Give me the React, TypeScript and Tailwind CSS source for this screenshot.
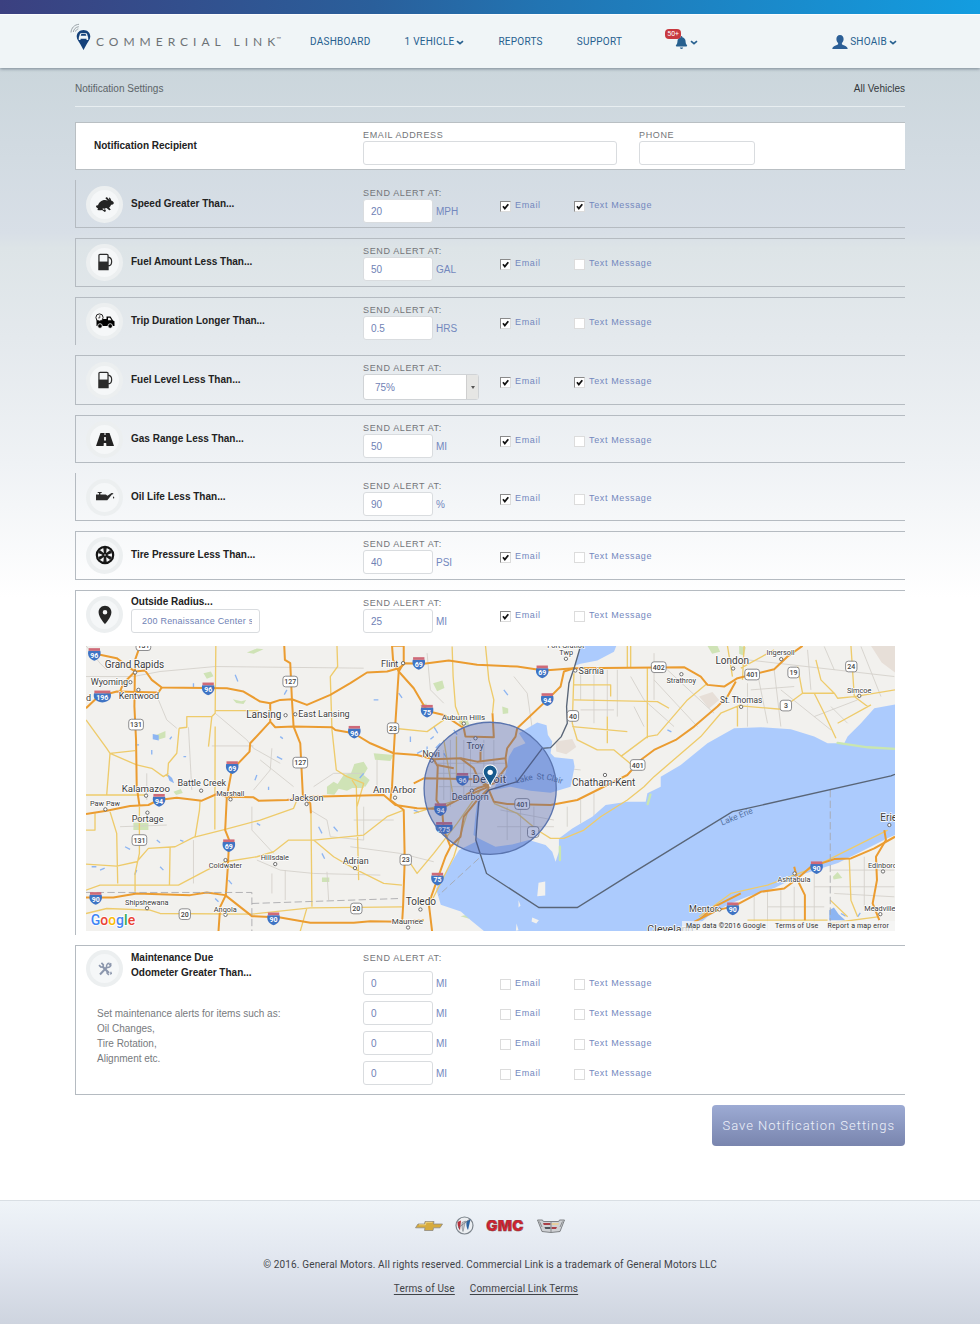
import type { ReactNode } from 'react';
import { FaBell } from 'react-icons/fa6';
import { MdPlace } from 'react-icons/md';

/* ---------- Icons ---------- */

function Caret() {
  return (
    <svg viewBox="0 0 8 5" className="w-2 h-[5px]" fill="none">
      <path d="M1 1.200 4 3.600 7 1.200" stroke="#27608f" strokeWidth="1.700" />
    </svg>
  );
}

function RabbitIcon() {
  return (
    <svg viewBox="0 0 18 15" className="w-[18px] h-[15px]" fill="#242424">
      <path d="M0 9.500C.4 8.200 1.300 8 2 8.500 2.500 5.500 5.500 3 9 3c1 0 2 .3 2.800.6L9.500 1.500C9.700.4 10.500.1 11.300.6l2.200 2.400C12.900 1.500 13 .6 13.500.4c.9.500 1.400 1.600 1.600 3.100 1.700.5 2.900 1.700 2.700 2.800-.3 1.200-1.700 1.500-2.800 1.500-.4 1.500-1.100 2.200-1.900 2.700l1.700 2.200-1.500.6-2.800-2.200-1.700.3 1.200 2.500-1.200 1.100L6 12.900c-1 .5-2.900.4-4.500 0l.4-1.900C.9 11 .2 10.400 0 9.500z" />
      <path d="M6.500 11.500h2v1.600l-1.500-.4z" fill="#eee" />
    </svg>
  );
}

function FuelIcon() {
  return (
    <svg viewBox="0 0 18 20" className="w-4 h-[18px]" fill="none" stroke="#2b2b2b">
      <path d="M2.200 18.500v-16a1.200 1.200 0 0 1 1.200-1.200h7.800a1.200 1.200 0 0 1 1.200 1.200v16z" strokeWidth="1.400" />
      <path d="M2 9.500h10.500V19H2z" fill="#2b2b2b" stroke="none" />
      <path d="M12.500 4.500c3 .5 4 2.500 4 5s-.8 4-2.200 4.500h-1.800" strokeWidth="1.300" />
    </svg>
  );
}

function VanIcon() {
  return (
    <svg viewBox="0 0 20 16" className="w-5 h-4">
      <path d="M1.500 6h10V3.500h4l2.500 4 1.500.8V13h-18z" fill="#000" />
      <path d="M13 4.700h2l1.500 2.600H13z" fill="#eee" />
      <circle cx="5" cy="13" r="2.300" fill="#000" stroke="#f3f3f3" strokeWidth=".8" />
      <circle cx="15.200" cy="13" r="2.300" fill="#000" stroke="#f3f3f3" strokeWidth=".8" />
      <circle cx="4.500" cy="4.500" r="3.600" fill="#fafafa" stroke="#222" strokeWidth="1" />
      <path d="M4.800 2.300v2.600H3.200" fill="none" stroke="#222" strokeWidth=".8" />
    </svg>
  );
}

function RoadIcon() {
  return (
    <svg viewBox="0 0 18 13" className="w-[18px] h-[13px]">
      <path d="M4.500 0h9L18 13H0z" fill="#222" />
      <path d="M8.500 0h1l.1 2H8.400zM8.200 4h1.600l.2 3.500H8zM7.800 10h2.400l.2 3H7.600z" fill="#f4f4f4" />
    </svg>
  );
}

function OilIcon() {
  return (
    <svg viewBox="0 0 20 12" className="w-5 h-3" fill="#2b2b2b">
      <path d="M1 3.500h3V2H2.700V1h4v1H5.400v1.500h5.400l1.700 1.300 4-2.800 1.800.3-.2 1-1.200.2-4.600 5.700H1z" />
      <path d="M18.600 5.200c.9 1.300.9 2.300 0 2.300s-.9-1 0-2.300z" />
    </svg>
  );
}

function WheelIcon() {
  return (
    <svg viewBox="0 0 20 20" className="size-5">
      <circle cx="10" cy="10" r="8.200" fill="#f5f6f7" stroke="#151515" strokeWidth="2.200" />
      {[0, 60, 120, 180, 240, 300].map((angle) => (
        <path key={angle} d="M9 9 8.300 3h3.400L11 9z" fill="#1c1c1c" transform={`rotate(${angle} 10 10)`} />
      ))}
      <circle cx="10" cy="10" r="2.600" fill="#1c1c1c" />
      <circle cx="10" cy="10" r="1" fill="#999" />
    </svg>
  );
}

function ToolsIcon() {
  return (
    <svg viewBox="0 0 14 14" className="size-3.5" fill="none" stroke="#8c97ad">
      <path d="M4.500 4.500 11 11" strokeWidth="2.200" />
      <path d="M1 3.200 3 5.200 5 4.800 5.300 2.800 3.400.9" strokeWidth="1.700" />
      <path d="M9.500 8.800 8.900 11l1.900 2M11.800 12.200l1.700-.6-.9-1.800" strokeWidth="1.300" />
      <path d="M2 12.500 9 5" strokeWidth="2" />
      <path d="M13.200 1.200 11.200 3.300M8.700 5.300C8 3 9.500 1.200 11.500 1.200M8.700 5.300c2.300.7 4.300-.8 4.300-2.800" strokeWidth="1.500" />
    </svg>
  );
}

function UserIcon() {
  return (
    <svg viewBox="0 0 16 14" className="w-4 h-3.5" fill="#2c5f96">
      <path d="M8 0c2.400 0 3.600 1.700 3.600 4 0 1.700-.7 3.200-1.700 4v1.300c.5.900 5.600 1.500 5.800 4.700H.3C.5 10.800 5.600 10.200 6.100 9.300V8c-1-.8-1.700-2.300-1.700-4C4.400 1.700 5.600 0 8 0z" />
    </svg>
  );
}

function BrandMark() {
  return (
    <svg viewBox="0 0 22 28" className="w-[22px] h-7 mb-2.5 shrink-0">
      <g fill="none" stroke="#9aa2a8" strokeWidth="1">
        <path d="M1 9.500C1.200 5 4.500 1.600 9 1.300" />
        <path d="M3.300 9C3.700 6.200 5.800 4 8.800 3.700" />
        <path d="M5.500 8.500c.3-1.200 1.300-2.200 2.800-2.600" />
      </g>
      <path d="M13.500 7C17.400 7 20.300 9.900 20.300 13.500c0 3-2.300 5.300-3.800 8L13.500 27l-3-5.500c-1.500-2.700-3.800-5-3.800-8C6.700 9.900 9.600 7 13.500 7z" fill="#14417a" />
      <path d="M9.300 13.300c.5-2.700 1-3 1.500-3.100h5.400c.5.100 1 .4 1.500 3.100.5.500.6 2.300.5 3.700h-1.700v-1.200h-6V17H8.800c-.1-1.400 0-3.200.5-3.700z" fill="#f0f5f8" />
      <path d="M10.700 12.700 11.300 11h4.400l.6 1.700z" fill="#14417a" />
    </svg>
  );
}

/* ---------- Header ---------- */

function NavLink({ label, caret }: { label: string; caret?: boolean }) {
  return (
    <a href="#" className="flex items-center gap-0.5 text-[10px] leading-4 tracking-wide text-[#27608f] whitespace-nowrap">
      {label}
      {caret && <Caret />}
    </a>
  );
}

function Header() {
  return (
    <header className="relative z-10 shadow-[0_1px_3px_rgba(60,75,90,0.55)]">
      <div className="h-3.5 bg-[linear-gradient(to_right,#3b4080,#2a5f9b_38%,#2274b2_55%,#139de0)]" />
      <div className="h-[54px] pt-px bg-[#f0f5f7] border-t border-white/70">
        <div className="max-w-[834px] mx-auto h-full flex items-center font-['Roboto',sans-serif]">
          <a href="#" className="flex items-center gap-1 text-[#6d7276] -ml-[3px] w-[240px]" aria-label="Commercial Link">
            <BrandMark />
            <span className="flex items-start font-['Lato',sans-serif] text-xs tracking-[5px] whitespace-nowrap">
              COMMERCIAL LINK
              <span className="-ml-1 text-[6px] leading-[10px] tracking-normal">™</span>
            </span>
          </a>
          <nav className="flex items-center gap-[34px]">
            <NavLink label="DASHBOARD" />
            <NavLink label="1 VEHICLE" caret />
            <NavLink label="REPORTS" />
            <NavLink label="SUPPORT" />
          </nav>
          <button type="button" aria-label="Alerts" className="relative ml-[53px] flex items-center gap-0.5 text-[#27608f]">
            <FaBell className="size-[13px]" />
            <Caret />
            <span className="absolute -left-2.5 -top-[7px] px-0.5 rounded-sm bg-[#c8393f] text-white text-[7px] leading-[10px]">50+</span>
          </button>
          <button type="button" className="ml-auto mr-2.5 flex items-center gap-0.5 text-[10px] leading-4 tracking-wide text-[#27608f]">
            <UserIcon />
            SHOAIB
            <Caret />
          </button>
        </div>
      </div>
    </header>
  );
}

/* ---------- Form pieces ---------- */

const inputClass = 'h-6 rounded-[3px] border border-[#d9dcdf] bg-white text-[#6f82b5]';

function IconCircle({ children }: { children: ReactNode }) {
  return (
    <div className="size-[37px] shrink-0 rounded-full border-4 border-[#eceff0] bg-[#f5f7f8] flex items-center justify-center">
      {children}
    </div>
  );
}

function Check({ label, checked }: { label: string; checked?: boolean }) {
  return (
    <label className="flex items-center gap-1 text-[9px] leading-3 tracking-[0.07em] text-[#7388be] whitespace-nowrap">
      <span className="relative size-[11px] mt-0.5">
        <input
          type="checkbox"
          defaultChecked={checked}
          className="peer block appearance-none size-[11px] bg-white border border-[#dcdcdc] checked:border-t-[#8a8a8a] checked:border-l-[#8a8a8a]"
        />
        <svg viewBox="0 0 11 11" className="absolute inset-0 hidden peer-checked:block pointer-events-none" fill="none">
          <path d="M3 5.300 4.800 7.500 8.300 3.200" stroke="#111" strokeWidth="1.800" />
        </svg>
      </span>
      {label}
    </label>
  );
}

function AlertLabel({ htmlFor, children }: { htmlFor: string; children: ReactNode }) {
  return (
    <label htmlFor={htmlFor} className="block text-[9px] leading-3 tracking-[0.07em] text-[#737579]">
      {children}
    </label>
  );
}

interface AlertRowProps {
  id: string;
  title: string;
  icon: ReactNode;
  value: string;
  unit?: string;
  email?: boolean;
  text?: boolean;
  extra?: ReactNode;
}

function AlertRow({ id, title, icon, value, unit, email, text, extra }: AlertRowProps) {
  return (
    <div className="grid grid-cols-[287px_137px_74px_1fr] items-center pt-1.5">
      <div className={`flex items-center gap-2 pl-2.5 -mt-0.5 ${extra ? 'self-end' : ''}`}>
        <IconCircle>{icon}</IconCircle>
        <div>
          <h2 className="text-[10px] leading-3 font-bold text-[#222]">{title}</h2>
          {extra}
        </div>
      </div>
      <div>
        <AlertLabel htmlFor={id}>SEND ALERT AT:</AlertLabel>
        {unit ? (
          <div className="flex items-center gap-[3px] text-[10px] text-[#7388be]">
            <input id={id} defaultValue={value} className={`${inputClass} w-[70px] px-[7px]`} />
            {unit}
          </div>
        ) : (
          <div className="relative w-[116px]">
            <select id={id} className="block appearance-none w-full h-[26px] pl-[11px] rounded-[3px] border border-[#d0d3d6] bg-white text-[10px] text-[#6f82b5]">
              <option>{value}</option>
            </select>
            <span className="absolute right-px top-px bottom-px w-3 border-l border-[#cfcfcf] bg-[#e6e6e4] flex items-center justify-center pointer-events-none">
              <svg viewBox="0 0 4 3" className="w-1 h-[3px]">
                <path d="M0 0h4L2 3z" fill="#555" />
              </svg>
            </span>
          </div>
        )}
      </div>
      <Check label="Email" checked={email} />
      <Check label="Text Message" checked={text} />
    </div>
  );
}

/* ---------- Map ---------- */

type Place = [x: number, y: number, name: string, size?: number];

const motorways = [
  'M60 45 110 55 150 85 165 95 195 92 215 120 245 143 440 145 490 155 540 185 570 190 600 180 635 178 680 195 750 165 810 130 860 98 920 95 955 85 975 70 1030 72 1105 62 1190 75 1310 80 1390 92 1480 85 1810 82 1860 110 1880 135 1930 140 1970 115 2080 88 2120 50 2165 18',
  'M18 205 55 170 110 155 235 158 245 143',
  'M165 95 130 130 120 155',
  'M180 18 165 60 163 200 168 300 170 440 178 495',
  'M18 522 80 512 150 498 205 495 235 480 290 473 365 482 410 462 440 470 520 472 535 482 620 480 690 470 910 465 945 495 1010 505 1080 507 1130 480 1225 440',
  'M612 18 614 60 630 70 635 178 640 260 660 310 668 470 690 490 692 520',
  'M570 190V245L585 262 640 260 755 262 765 270 820 280 870 310 940 340 1010 345 1060 358 1140 355 1190 365 1275 355 1280 325 1305 290 1310 265 1400 180 1440 140 1450 95 1480 85',
  'M570 245 510 310 508 335 455 390 440 470 437 530 435 570 447 600 443 680 437 765 420 800 415 873',
  'M18 772 100 772 170 760 330 765 380 757 435 765 515 828 600 832 690 848 820 848 870 843 960 845 1030 840',
  'M935 18H970V70L955 95M935 18 938 60 955 95 1000 145 1040 213 1090 225 1150 265 1155 290 1240 292 1236 220',
  'M955 95 945 250 940 340 935 440 930 480 970 510 973 660 968 800 965 850',
  'M1060 358 1072 380 1068 480 1085 510 1090 570 1110 620',
  'M1225 445 1190 480 1150 530 1140 590 1110 620 1095 650 1070 720 1045 790 1055 873',
  'M1275 355 1278 380 1240 430 1190 445 1130 480M1140 355 1180 385 1195 420 1225 445M1000 430 1030 415 1190 418 1230 440M1070 375 1120 385M1200 330V365',
  'M1225 450 1240 485 1280 492 1410 495 1490 480 1550 450 1600 425 1640 405 1680 360 1720 330 1785 300 1840 260 1910 200 1940 170 1965 125',
  'M1840 845 1910 810 1960 798 2040 755 2110 745 2150 715 2190 680 2260 657 2310 655 2380 625 2442 590',
  'M2140 680 2150 720 2172 765V840M2410 570 2415 600 2385 650 2388 720 2375 790 2395 840M1860 835 1900 800 1980 760',
];

const roads =
  'M407 18 405 220 395 230 385 320M405 260 404 568M18 240 80 325 90 340 170 375 215 385 250 410 265 400M90 340 165 332M90 340 80 465M297 265 320 262V230L395 230M405 212H535M297 265 290 340 265 370 262 410M770 18 772 80 750 110 755 270 768 390 800 410 850 430 830 500M18 465H200M90 515 110 580 113 730M178 500V640L165 700V755M18 672 110 678 170 665 205 625 285 620 340 592 435 568 540 540 640 505 650 480M18 750 60 735 295 735 380 690 435 665 530 650 580 635 625 600 700 600 850 585 920 530 970 510M360 480 358 510 345 590M270 620 268 735M692 520 695 800M700 600 760 650 820 685 910 730 965 735M18 820 80 805 210 810 240 820 515 822 690 803 965 800M815 420 828 440 835 720M660 873 680 803M18 570H45V520M1115 20 1118 110 1125 200 1150 265M1215 18 1225 120 1240 180 1236 220M1480 100 1475 250 1490 300 1550 330 1600 330 1660 380M1480 135H1590V170M1480 180 1730 185 1765 205M1580 230V310M1640 82V18M1475 260 1640 275M940 265 1040 275 1090 240M1000 520 1130 480M970 640 1010 700 1060 640 1130 550 1200 450M1050 790 1120 650 1160 520M1240 490 1310 520 1370 570 1410 595 1450 595 1510 570 1560 530 1640 480 1690 440 1720 410 1860 290 1920 220 1980 195M1620 350 1700 290 1730 285 1820 180 1880 130M1650 18V82M1700 82V295M1980 198 2100 208 2165 160 2260 160 2270 175 2320 170 2442 150M2150 80 2165 160M2205 60 2220 120 2260 160M2200 160 2230 220 2265 295M2310 18 2320 170 2360 200M1970 200V260M2270 250 2370 195M1980 85 2080 30M1940 18 1955 110M1990 18 1985 120M1855 830 1950 760 2060 735 2180 690 2420 570M2000 840H2240M2248 780 2300 830M2305 657 2310 780 2330 830M2240 850 2390 830M1090 300 1120 480M1128 290V420';

const lanes =
  'M18 110H160L240 95 405 80 850 85M235 180 260 240 290 265M405 220 500 300 520 325 600 370M395 318H520M325 262 335 450M575 325 570 390 520 450M640 440 540 360M515 500V570L580 640M530 660 600 690 700 700 900 705M575 700V760M615 690V780M740 695 745 780M700 440 760 400 850 400M690 510 740 540 750 590 850 600M18 18 60 70 80 90M200 400V480M120 560 260 555M340 600V730M890 360V460M1040 40 1050 150 1090 190M1300 110 1340 160 1360 300M1500 100V180M1540 100V250M1580 90V230M1610 90V230M1500 210H1600M1650 110 1690 180 1780 260M1720 120 1850 260M1760 90 1900 220M1660 200 1690 260M1720 40V180M2000 130V260M2030 100 2060 250M2080 90 2100 260M2010 150 2140 140M2000 60 2440 110M2180 30 2190 150M2230 20 2260 90M2340 20 2400 170M2100 150 2250 270M2200 230 2330 180M2250 200 2300 250M1460 500V560M1500 480V550M1540 460V540M1260 510 1420 540M1280 500V600M1320 500V610M1360 500V600M1250 560H1420M1410 380 1500 390M2020 770V870M2060 750V870M2100 750V870M2140 740V870M2200 700V870M2060 800H2230M2200 740H2440M2350 650V800M2250 690H2440M2260 760 2440 770M1060 370H1280M1070 400H1270M1075 440H1200M1090 330V480M1110 300V500M1150 300V480M1170 300V440M1210 300V440M1240 300V420M810 620 960 640 1060 665M820 540H940M850 500V600';

const ponds =
  'M165 315h12M215 330v14M275 290l-6 8M340 130v12M465 105l8 20M530 405l-6 16M565 440v10M600 290l8 6M135 620l15 8M240 680l10 10M170 690l-6 14M300 600l10 4M445 720l10 12M530 550l10 6M715 560l10 20M725 640l8 16M760 560l12 14M590 350l16 8M310 350h8M60 690l14-6M35 680h14M230 600l10 8M620 150l-8 14M955 160l10 14M880 180h14M1060 260l12 20M1080 310l-14 14M1040 320v18M1090 340l8 12M1010 340l16-8M1270 150l12 16M990 290v16M1060 290l-10 8M1120 270l10 14M850 400l-12 14M1000 510l16 6M405 775l10 10M1760 270l12 6M2280 820l14 8M2330 830l8-12';

const interstates: [number, number, string][] = [
  [43, 43, '96'], [67, 170, '196'], [384, 146, '96'], [456, 382, '69'], [237, 480, '94'],
  [446, 616, '69'], [47, 774, '90'], [580, 835, '90'], [822, 276, '96'], [1015, 70, '69'],
  [1385, 95, '69'], [1400, 178, '94'], [1040, 213, '75'], [1146, 417, '96'], [1080, 508, '94'],
  [1091, 564, '275'], [1071, 716, '75'], [2207, 682, '90'], [1956, 805, '90'],
];

const highways: [number, number, string][] = [
  [190, 16, '131'], [168, 254, '131'], [178, 600, '131'], [630, 125, '127'], [660, 368, '127'],
  [314, 822, '20'], [828, 805, '20'], [938, 265, '23'], [976, 659, '23'], [1477, 228, '40'],
  [1325, 492, '401'], [1358, 576, '3'], [1734, 82, '402'], [2014, 104, '401'], [2138, 98, '19'],
  [2311, 80, '24'], [2115, 197, '3'], [1671, 375, '401'],
];

const places: Place[] = [
  [74, 84, 'Grand Rapids', 30], [32, 134, 'Wyoming'], [116, 178, 'Kentwood'], [18, 183, 'd'],
  [498, 234, 'Lansing', 30], [654, 232, 'East Lansing'], [125, 455, 'Kalamazoo', 29],
  [292, 439, 'Battle Creek'], [408, 469, 'Marshall', 22], [30, 498, 'Paw Paw', 22],
  [155, 545, 'Portage'], [628, 482, 'Jackson'], [542, 661, 'Hillsdale', 22],
  [386, 685, 'Coldwater', 22], [787, 671, 'Adrian'], [135, 794, 'Shipshewana', 22],
  [401, 815, 'Angola', 22], [902, 81, 'Flint'], [1084, 239, 'Auburn Hills', 24],
  [1158, 327, 'Troy'], [1026, 351, 'Novi', 26], [1176, 429, 'Detroit', 34],
  [1114, 481, 'Dearborn'], [878, 459, 'Ann Arbor', 29], [976, 794, 'Toledo', 30],
  [934, 853, 'Maumee', 24], [1400, 24, 'Fort Gratiot', 22], [1436, 46, 'Twp', 22],
  [1494, 101, 'Sarnia'], [1474, 439, 'Chatham-Kent', 30], [1904, 71, 'London', 30],
  [2057, 47, 'Ingersoll', 22], [1757, 129, 'Strathroy', 22], [1918, 190, 'St. Thomas', 25],
  [2298, 158, 'Simcoe', 22], [2398, 543, 'Erie', 30], [2361, 685, 'Edinboro', 22],
  [2090, 725, 'Ashtabula', 22], [1825, 816, 'Mentor'], [2350, 812, 'Meadville', 22],
  [1700, 879, 'Cleveland', 32],
];

const towns = [
  [165, 98], [151, 127], [175, 150], [616, 226], [645, 223], [198, 467], [363, 452], [451, 478],
  [76, 508], [202, 518], [679, 492], [585, 672], [436, 660], [824, 684], [201, 804], [436, 824],
  [968, 70], [1150, 251], [1185, 295], [1054, 362], [1174, 452], [944, 473], [1020, 808], [983, 862],
  [1456, 57], [1484, 92], [1573, 405], [1957, 86], [2101, 58], [1802, 103], [1981, 201], [2335, 168],
  [2425, 555], [2406, 694], [2141, 700], [1916, 808], [2398, 822],
];

function RadiusMap() {
  return (
    <div className="relative mt-[13px] mx-2.5 overflow-hidden">
      <svg
        viewBox="18 18 2424 855"
        preserveAspectRatio="xMidYMid slice"
        className="block w-full h-[285px] font-['Roboto',sans-serif]"
        role="img"
        aria-label="Radius map"
      >
        <path d="M18 18h2424v855H18z" fill="#f2f1ee" />

        {/* parks */}
        <g fill="#cfe3b6">
          <path d="M740 440 760 425 772 432 790 405 812 400 822 372 850 365 862 385 850 405 868 420 855 440 832 436 800 452 775 446 762 464 740 462zM370 100l22-5 8 14-20 8zM458 178l25 6 15-4-8 12-22-3zM228 285l28-12v20l-20 6zM500 38l30-12 20 2-30 14zM160 548h45v22h-45zM725 712h22v14h-22zM280 455l22-8 6 12-20 6z" />
          <path d="M1058 130l28-8 6 22-22 10zM1020 195l18-4 4 14-18 2zM1265 200l18 6v14l-16 2zM880 340l60 5-10 18-46-4zM1130 230l30 6 8 22-30-4zM810 430h40v14h-40zM1140 828l26-6v14zM1880 18h30l8 18-24 6zM1975 18l20 4-6 26-14-6zM2256 710l14-14 14 18-26 4zM2270 640l16-8 6 12-20 6z" />
        </g>
        <path d="M1855 170l40-14 20 24-30 26zM2370 18h72v80l-40-30zM1425 305l50-8 12 24-30 22-30-8z" fill="#e7dfd8" />

        <path d={lanes} fill="none" stroke="#d2cfc9" strokeWidth="2.500" />

        {/* lakes */}
        <g fill="#accbfd">
          <path d="M1500 18h107l-7 18-50 26-50 10-18 6z" />
          <path d="M1370 248l28 8 4 29 13 20-5 35 12 12 56 6 4 22-12 60-60 18-60-6-60-12-50 10 10-25 25-25 10-50 15-25 35-15-20-30z" />
          <path d="M1200 470l-6 60-8 75-50 25-36 60-33 56 14 48 60 20 30 26 40 33h620l50-44 60-35 60-25 80-25 80-40 110-35 70-35 80-40 41-18V190l-82 15-40 45-40 40-10 20h-50l-40-20-70-22-90-6-80 3-80 45-80 65-60 35v30l-40 20-5 25h-55l-65 10-40 35-60 35-40 30v40l-10 30-10-30-20-20-50-15-50 13-50 7-50-25-16-10 6-60 10-70z" />
        </g>
        <path d="M1438 660v-40M1701 492l8-28M2270 309l90 13 82 5" fill="none" stroke="#c9e6b0" strokeWidth="7" strokeLinecap="round" />
        <g fill="#f2f1ee">
          <path d="M1374 728l20-4v42l-24 2zM1355 832l20 8-8 10-14-6zM1314 780l6 16-6 6zM1308 850l6 20-8 2z" />
        </g>
        <path d={ponds} fill="none" stroke="#8db5f2" strokeWidth="4" />
        <path d="M2245 810l14-8 14 20 20 18h-48zM260 400l16 14 6 16-14-8zM218 282l18 4v16l-18-4z" fill="#8db5f2" />

        {/* roads */}
        <path d={roads} fill="none" stroke="#eecb6b" strokeWidth="4" strokeLinejoin="round" />
        {motorways.map((d) => (
          <path key={d} d={d} fill="none" stroke="#eb9c30" strokeWidth="6" strokeLinejoin="round" />
        ))}

        {/* borders */}
        <path d="M18 757H515V873M515 790 960 775M1195 655 1075 765M2248 450V873" fill="none" stroke="#a5a5a8" strokeWidth="2.500" strokeDasharray="22 10" />
        <path
          d="M1500 18 1482 80 1465 130 1458 200 1460 250 1442 290 1410 323 1385 325 1310 425 1225 450 1195 485 1190 540 1186 600 1218 700 1375 802H1490L1650 702 1955 515 2430 408 2442 403"
          fill="none"
          stroke="#596577"
          strokeWidth="4"
        />

        {towns.map(([x, y]) => (
          <circle key={`${x}-${y}`} cx={x} cy={y} r="5" fill="#fff" stroke="#555" strokeWidth="2.500" />
        ))}

        {interstates.map(([x, y, n]) => (
          <g key={`i${x}`} transform={`translate(${x} ${y})`}>
            <path d={n.length > 2 ? 'M-25-10h50c3 14-2 24-25 28-23-4-28-14-25-28z' : 'M-18-10h36c3 14-2 24-18 30-16-6-21-16-18-30z'} fill="#3f74c4" />
            <path d={n.length > 2 ? 'M-24-18h48v8h-48z' : 'M-17-18h34v8h-34z'} fill="#cf6a78" />
            <text y="11" textAnchor="middle" fontSize="21" fontWeight="700" fill="#fff">{n}</text>
          </g>
        ))}
        {highways.map(([x, y, n]) => (
          <g key={`h${x}-${y}`} transform={`translate(${x} ${y})`}>
            <rect x={n.length > 2 ? -22 : -17} y="-16" width={n.length > 2 ? 44 : 34} height="32" rx="8" fill="#fff" stroke="#77777a" strokeWidth="2.500" />
            <text y="8" textAnchor="middle" fontSize="21" fontWeight="500" fill="#444">{n}</text>
          </g>
        ))}

        <g fill="#3c3c3c" stroke="#fff" strokeWidth="4" strokeLinejoin="round" paintOrder="stroke">
          {places.map(([x, y, name, size = 27]) => (
            <text key={name} x={x} y={y} fontSize={size}>{name}</text>
          ))}
        </g>
        <g fill="#55719f" fontSize="25">
          <text transform="translate(1306 430) rotate(-12)">Lake</text>
          <text transform="translate(1368 418) rotate(2)">St</text>
          <text transform="translate(1396 418) rotate(16)">Clair</text>
          <text transform="translate(1924 556) rotate(-22)">Lake Erie</text>
        </g>

        {/* alert radius */}
        <circle cx="1229" cy="445" r="198" fill="#3f57a8" fillOpacity=".36" stroke="#5a74ae" strokeWidth="4" />
        <path d="M1229 441c-4-20-21-30-21-45a21 21 0 0 1 42 0c0 15-17 25-21 45z" fill="#175a8e" stroke="#fff" strokeWidth="3" />
        <circle cx="1229" cy="397" r="8" fill="#fff" />

        <g fontSize="42" fontWeight="500" stroke="#fff" strokeWidth="5" paintOrder="stroke">
          <text x="32" y="856">
            <tspan fill="#4285f4">G</tspan>
            <tspan fill="#ea4335">o</tspan>
            <tspan fill="#fbbc05">o</tspan>
            <tspan fill="#4285f4">g</tspan>
            <tspan fill="#34a853">l</tspan>
            <tspan fill="#ea4335">e</tspan>
          </text>
        </g>
      </svg>
      <div className="absolute right-0 bottom-0 h-2.5 pl-1 pr-1.5 flex items-center gap-[9px] bg-[#f5f5f5]/75 font-['Roboto',sans-serif] text-[7px] leading-[10px] tracking-wide text-[#333]">
        <span>Map data ©2016 Google</span>
        <a href="#">Terms of Use</a>
        <a href="#">Report a map error</a>
      </div>
    </div>
  );
}

/* ---------- Footer ---------- */

function Footer() {
  return (
    <footer className="border-t border-[#d9dfe4] bg-[linear-gradient(to_bottom,#eff4f8,#e2e7f0_45%,#ced4df)] pt-[15px] pb-[27px] flex flex-col items-center font-['Roboto',sans-serif] text-[10px] leading-4 tracking-[0.015em] text-[#3f4347]">
      <div className="flex items-center gap-3 h-[19px]">
        <svg viewBox="0 0 28 10" className="w-7 h-2.5" role="img" aria-label="Chevrolet">
          <path d="M3 3h6.500L10 .5h9L18.500 3h9L25 6.800h-6.500L18 9.500H9.500l.5-2.700H.5z" fill="#d6ab3d" stroke="#8f8a80" strokeWidth=".8" />
          <path d="M4 3.800h6.500l.5-2.500h6.500" fill="none" stroke="#f3dc95" strokeWidth=".8" />
        </svg>
        <svg viewBox="0 0 19 19" className="size-[19px]" role="img" aria-label="Buick">
          <circle cx="9.500" cy="9.500" r="8.500" fill="#eceff2" stroke="#7d858d" strokeWidth="1.200" />
          <path d="M2.500 6 6 4.500l-1 10c-2-3-2.500-5.500-2.500-8.500z" fill="#b5303c" />
          <path d="M7 6.500 10.500 5 8 15.500c-1-2.500-1.200-6.500-1-9z" fill="#c8ccd2" stroke="#60676f" strokeWidth=".5" />
          <path d="m11.500 5 4-1.500L13 14c-1.500-2-2-6-1.500-9z" fill="#2c63a0" />
          <path d="M3 12 15 3" stroke="#697078" strokeWidth=".7" />
        </svg>
        <svg viewBox="0 0 39 12" className="w-[39px] h-3" role="img" aria-label="GMC">
          <text x="19" y="11" textAnchor="middle" fontFamily="Inter, sans-serif" fontSize="15" fontWeight="900" fill="#d3222f" stroke="#7d3a3e" strokeWidth=".5">GMC</text>
        </svg>
        <svg viewBox="0 0 28 14" className="w-7 h-3.5" role="img" aria-label="Cadillac">
          <path d="M.5 1h5l.8 1.500h15.400L22.500 1h5L23 12.500l-9 1-9-1z" fill="#cfd1d4" stroke="#74777b" strokeWidth=".9" />
          <path d="M6 4h7.500v2H6.800zM14.500 8H20l-1 2h-4.500z" fill="#a93f46" />
          <path d="M14.500 4H22l-.8 2h-6.700z" fill="#e7cf9e" />
          <path d="M7.500 8h6v2H8.300z" fill="#50545a" />
          <path d="M2.500 2.500 5 8M25.500 2.500 23 8M14 3v10" stroke="#74777b" strokeWidth=".8" />
        </svg>
      </div>
      <p className="mt-[22px]">© 2016. General Motors. All rights reserved. Commercial Link is a trademark of General Motors LLC</p>
      <div className="mt-2 mr-2 flex gap-[15px]">
        <a href="#" className="underline underline-offset-2">Terms of Use</a>
        <a href="#" className="underline underline-offset-2">Commercial Link Terms</a>
      </div>
    </footer>
  );
}

/* ---------- Page ---------- */

export default function App() {
  return (
    <div className="font-['Liberation_Sans',Arial,sans-serif]">
      <Header />
      <main className="bg-[linear-gradient(to_bottom,#cbd6dc_0px,#d8dfe7_165px,#dde4e7_180px,#e4e9ed_270px,#eff2f5_395px,#ffffff_530px)] pt-[13px] pb-[54px]">
        <div className="max-w-[830px] mx-auto">
          <div className="flex justify-between items-center pb-[9px] border-b border-[#e8eef1] text-[10px] leading-4">
            <h1 className="text-[#5c6468]">Notification Settings</h1>
            <a href="#" className="text-[#33373b]">All Vehicles</a>
          </div>

          <form className="mt-[15px] flex flex-col gap-2.5">
            <section className="grid grid-cols-[287px_276px_1fr] items-center border border-r-0 border-[#b9bfc3] bg-white pt-1.5 pb-1">
              <h2 className="pl-[18px] pb-0.5 text-[10px] leading-3 font-bold text-[#222]">Notification Recipient</h2>
              <div>
                <AlertLabel htmlFor="email">EMAIL ADDRESS</AlertLabel>
                <input id="email" type="email" className={`${inputClass} block w-[254px] px-2 text-[10px]`} />
              </div>
              <div>
                <AlertLabel htmlFor="phone">PHONE</AlertLabel>
                <input id="phone" type="tel" className={`${inputClass} block w-[116px] px-2 text-[10px]`} />
              </div>
            </section>

            <section className="border-l border-b border-[#b5bbc1] pt-px pb-1">
              <AlertRow id="speed" title="Speed Greater Than..." icon={<RabbitIcon />} value="20" unit="MPH" email text />
            </section>
            <section className="border border-r-0 border-[#b5bbc1] pb-[5px]">
              <AlertRow id="fuel-amount" title="Fuel Amount Less Than..." icon={<FuelIcon />} value="50" unit="GAL" email />
            </section>
            <section className="border-l border-t border-[#b5bbc1] pb-[5px]">
              <AlertRow id="trip" title="Trip Duration Longer Than..." icon={<VanIcon />} value="0.5" unit="HRS" email />
            </section>
            <section className="border border-r-0 border-[#b5bbc1] pb-1">
              <AlertRow id="fuel-level" title="Fuel Level Less Than..." icon={<FuelIcon />} value="75%" email text />
            </section>
            <section className="border border-r-0 border-[#b5bbc1] pb-1">
              <AlertRow id="gas-range" title="Gas Range Less Than..." icon={<RoadIcon />} value="50" unit="MI" email />
            </section>
            <section className="border-l border-b border-[#b5bbc1] pt-px pb-1">
              <AlertRow id="oil-life" title="Oil Life Less Than..." icon={<OilIcon />} value="90" unit="%" email />
            </section>
            <section className="border border-r-0 border-[#b5bbc1] pb-[5px]">
              <AlertRow id="tire" title="Tire Pressure Less Than..." icon={<WheelIcon />} value="40" unit="PSI" email />
            </section>
            <section className="border-l border-t border-[#b5bbc1] pb-1">
              <AlertRow
                id="radius"
                title="Outside Radius..."
                icon={<MdPlace className="size-[22px] text-[#262626]" />}
                value="25"
                unit="MI"
                email
                extra={
                  <input
                    aria-label="Radius center address"
                    defaultValue="200 Renaissance Center suite"
                    className={`${inputClass} block mt-px w-[129px] pl-2.5 pr-[7px] text-[9px] tracking-wide`}
                  />
                }
              />
              <RadiusMap />
            </section>

            <section className="grid grid-cols-[287px_1fr] border border-r-0 border-[#b5bbc1] pt-1.5 pb-[9px]">
              <div className="pl-2.5">
                <div className="flex items-start gap-2 -mt-0.5">
                  <IconCircle>
                    <ToolsIcon />
                  </IconCircle>
                  <h2 className="text-[10px] leading-[15px] font-bold text-[#222]">
                    Maintenance Due
                    <br />
                    Odometer Greater Than...
                  </h2>
                </div>
                <p className="mt-[19px] pl-[11px] text-[10px] leading-[15px] text-[#777a7d]">
                  Set maintenance alerts for items such as:
                  <br />
                  Oil Changes,
                  <br />
                  Tire Rotation,
                  <br />
                  Alignment etc.
                </p>
              </div>
              <div>
                <AlertLabel htmlFor="odometer-1">SEND ALERT AT:</AlertLabel>
                <div className="mt-[7px] flex flex-col gap-1.5">
                  {[1, 2, 3, 4].map((n) => (
                    <div key={n} className="grid grid-cols-[137px_74px_1fr] items-center">
                      <div className="flex items-center gap-[3px] text-[10px] text-[#7388be]">
                        <input
                          id={`odometer-${n}`}
                          aria-label={`Odometer alert ${n}`}
                          defaultValue="0"
                          className={`${inputClass} w-[70px] px-[7px]`}
                        />
                        MI
                      </div>
                      <Check label="Email" />
                      <Check label="Text Message" />
                    </div>
                  ))}
                </div>
              </div>
            </section>

            <button
              type="button"
              className="self-end px-2.5 h-[41px] rounded-sm bg-linear-to-b from-[#9dabd4] to-[#7985ae] font-['Roboto',sans-serif] font-light text-[13px] tracking-[1px] text-[#eef1fa]"
            >
              Save Notification Settings
            </button>
          </form>
        </div>
      </main>
      <Footer />
    </div>
  );
}
